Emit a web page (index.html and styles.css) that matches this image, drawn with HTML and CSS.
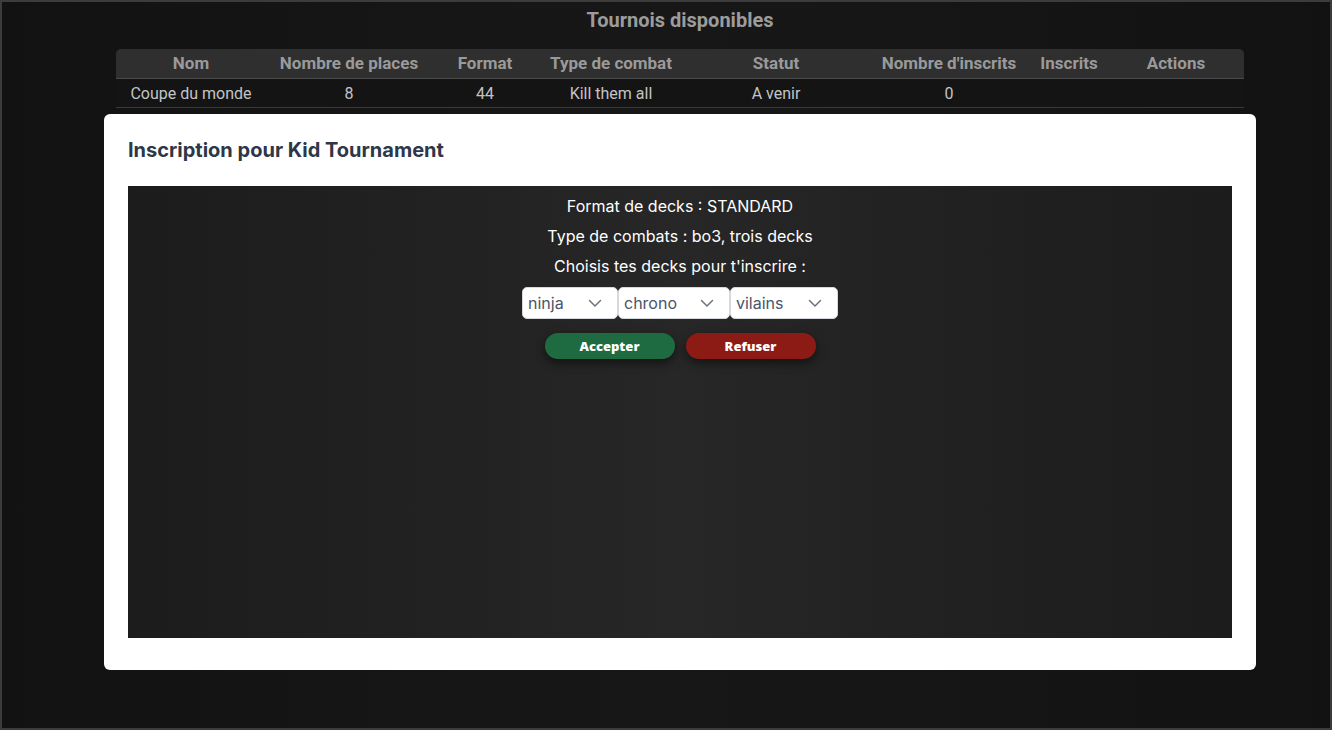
FILE: index.html
```html
<!DOCTYPE html>
<html lang="fr">
<head>
<meta charset="utf-8">
<title>Tournois disponibles</title>
<link rel="stylesheet" href="styles.css">
</head>
<body>
<div class="frame">
  <h1 class="page-title">Tournois disponibles</h1>
  <table class="tournaments">
    <thead>
      <tr>
        <th class="c-nom">Nom</th>
        <th class="c-places">Nombre de places</th>
        <th class="c-format">Format</th>
        <th class="c-type">Type de combat</th>
        <th class="c-statut">Statut</th>
        <th class="c-nb">Nombre d'inscrits</th>
        <th class="c-inscrits">Inscrits</th>
        <th class="c-actions">Actions</th>
      </tr>
    </thead>
    <tbody>
      <tr>
        <td>Coupe du monde</td>
        <td>8</td>
        <td>44</td>
        <td>Kill them all</td>
        <td>A venir</td>
        <td>0</td>
        <td></td>
        <td></td>
      </tr>
    </tbody>
  </table>

  <div class="modal">
    <h2 class="modal-title">Inscription pour Kid Tournament</h2>
    <div class="modal-body">
      <p class="info">Format de decks : STANDARD</p>
      <p class="info">Type de combats : bo3, trois decks</p>
      <p class="info">Choisis tes decks pour t'inscrire :</p>
      <div class="selects">
        <div class="select s1"><span>ninja</span><svg viewBox="0 0 16 16" width="16" height="16"><path d="M2.5 5.5 8 11l5.5-5.5" fill="none" stroke="currentColor" stroke-width="1.5" stroke-linecap="round" stroke-linejoin="round"/></svg></div>
        <div class="select s2"><span>chrono</span><svg viewBox="0 0 16 16" width="16" height="16"><path d="M2.5 5.5 8 11l5.5-5.5" fill="none" stroke="currentColor" stroke-width="1.5" stroke-linecap="round" stroke-linejoin="round"/></svg></div>
        <div class="select s3"><span>vilains</span><svg viewBox="0 0 16 16" width="16" height="16"><path d="M2.5 5.5 8 11l5.5-5.5" fill="none" stroke="currentColor" stroke-width="1.5" stroke-linecap="round" stroke-linejoin="round"/></svg></div>
      </div>
      <div class="buttons">
        <button class="btn btn-accept">Accepter</button>
        <button class="btn btn-refuse">Refuser</button>
      </div>
    </div>
  </div>
</div>
</body>
</html>
```
FILE: styles.css
```css
html, body {
  margin: 0;
  padding: 0;
  height: 100%;
}
body {
  background: #111;
}
.frame {
  box-sizing: border-box;
  width: 1332px;
  height: 730px;
  border: 2px solid #3c3c3c;
  padding-left: 28px;
  background: linear-gradient(90deg, #121212 0%, #161616 35%, #171717 50%, #161616 65%, #121212 100%);
  display: flex;
  flex-direction: column;
  align-items: center;
  font-family: Roboto, "Liberation Sans", sans-serif;
}
.page-title {
  margin: 7px 0 0;
  height: 22px;
  line-height: 22px;
  font-size: 20px;
  font-weight: 700;
  color: #9c9c9c;
}
.tournaments {
  margin-top: 18px;
  width: 1128px;
  border-collapse: separate;
  border-spacing: 0;
  font-size: 16px;
}
.tournaments th {
  background: #2f2f2f;
  color: #9a9a9a;
  font-weight: 700;
  font-size: 17px;
  height: 27px;
  padding: 0 0 2px;
  border-bottom: 1px solid #4a4a4a;
  text-align: center;
}
.tournaments th:first-child { border-top-left-radius: 5px; }
.tournaments th:last-child { border-top-right-radius: 5px; }
.tournaments td {
  background: #141414;
  color: #c4c4c4;
  height: 28px;
  padding: 0;
  text-align: center;
  border-bottom: 1px solid #3a3a3a;
}
.c-nom { width: 150px; }
.c-places { width: 166px; }
.c-format { width: 106px; }
.c-type { width: 146px; }
.c-statut { width: 184px; }
.c-nb { width: 162px; }
.c-inscrits { width: 78px; }
.c-actions { width: 136px; }

.modal {
  margin-top: 6px;
  box-sizing: border-box;
  width: 1152px;
  height: 556px;
  background: #fff;
  border-radius: 6px;
  padding: 24px;
  display: flex;
  flex-direction: column;
  font-family: Inter, "Noto Sans", sans-serif;
}
.modal-title {
  margin: 0;
  height: 24px;
  line-height: 24px;
  font-size: 20px;
  font-weight: 700;
  color: #2d3748;
}
.modal-body {
  margin-top: 24px;
  height: 452px;
  background: linear-gradient(90deg, #1c1c1c 0%, #222 30%, #272727 50%, #222 70%, #1c1c1c 100%);
  display: flex;
  flex-direction: column;
  align-items: center;
  padding-top: 9px;
  box-sizing: border-box;
}
.info {
  margin: 0;
  height: 30px;
  line-height: 22px;
  font-size: 16px;
  color: #fff;
}
.selects {
  display: flex;
  gap: 0;
  margin-top: 2px;
}
.select {
  box-sizing: border-box;
  height: 32px;
  background: #fff;
  border: 1px solid #d6d9de;
  border-radius: 5px;
  display: flex;
  align-items: center;
  justify-content: space-between;
  padding: 0 14px 0 5px;
  font-size: 16px;
  color: #4a5568;
}
.select svg { color: #6b7280; }
.s1 { width: 96px; }
.s2 { width: 112px; }
.s3 { width: 108px; }
.buttons {
  display: flex;
  gap: 11px;
  margin-top: 14px;
}
.btn {
  width: 130px;
  height: 26px;
  border: none;
  border-radius: 13px;
  color: #fff;
  font-family: "Open Sans", Inter, sans-serif;
  font-weight: 800;
  font-size: 13px;
  box-shadow: 0 4px 10px rgba(0, 0, 0, 0.5);
}
.btn-accept { background: #1e6b41; }
.btn-refuse { background: #8c1b15; }
```
